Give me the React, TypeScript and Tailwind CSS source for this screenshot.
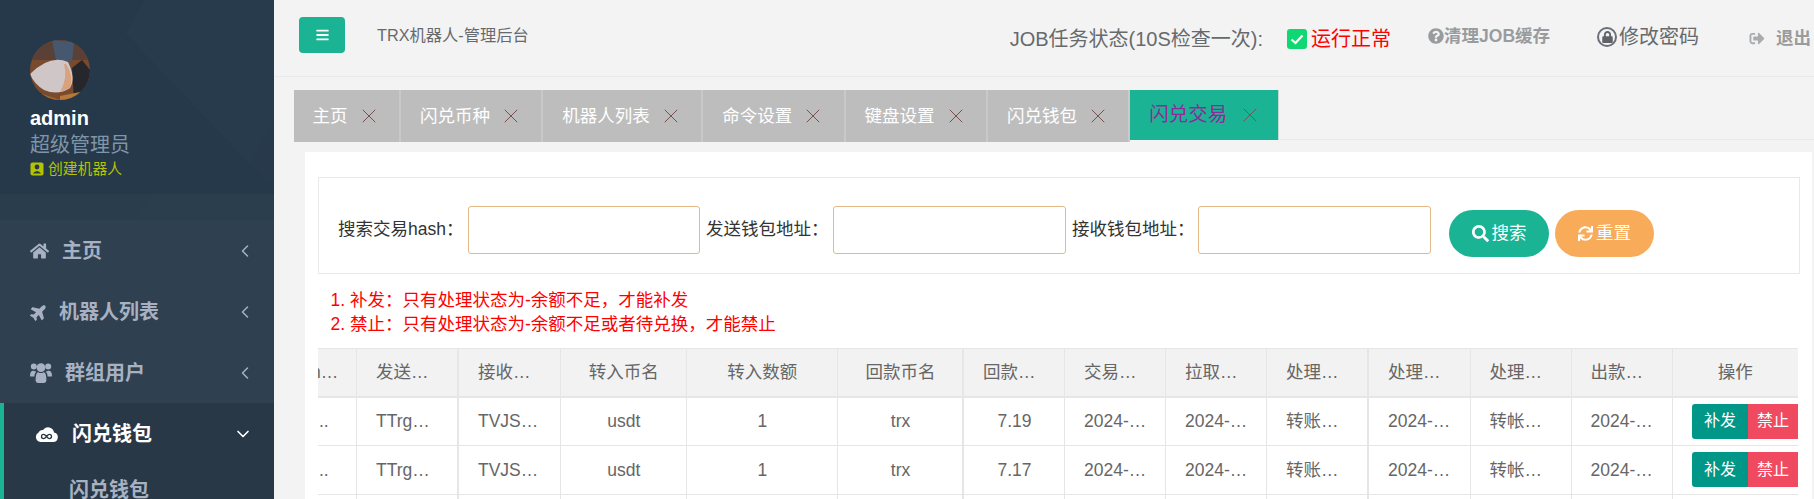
import React from "react";
import { FaHome, FaPlane, FaSearch, FaSync, FaQuestionCircle, FaLock, FaSignOutAlt, FaBars } from "react-icons/fa";
import { X, ChevronLeft, ChevronDown } from "lucide-react";

const tabs = ["主页", "闪兑币种", "机器人列表", "命令设置", "键盘设置", "闪兑钱包"];

const cols = [
  { cls: "w-[39px]", bar: "border-r", h: "n…", c: ".." },
  { cls: "w-[102px]", bar: "border-r-2", h: "发送钱包地址", c: "TTrg5xkVmQ2n" },
  { cls: "w-[102px]", bar: "border-r", h: "接收钱包地址", c: "TVJS8pLqWz3k" },
  { cls: "w-[125.5px]", bar: "border-r", h: "转入币名", c: "usdt" },
  { cls: "w-[151.5px]", bar: "border-r", h: "转入数额", c: "1" },
  { cls: "w-[126px]", bar: "border-r-2", h: "回款币名", c: "trx" },
  { cls: "w-[101px]", bar: "border-r", h: "回款数额", c: "7.19" },
  { cls: "w-[101px]", bar: "border-r", h: "交易时间", c: "2024-03-18 10:21" },
  { cls: "w-[101px]", bar: "border-r", h: "拉取时间", c: "2024-03-18 10:21" },
  { cls: "w-[102px]", bar: "border-r-2", h: "处理状态", c: "转账成功" },
  { cls: "w-[101.5px]", bar: "border-r", h: "处理时间", c: "2024-03-18 10:22" },
  { cls: "w-[101px]", bar: "border-r", h: "处理结果", c: "转帐成功" },
  { cls: "w-[101px]", bar: "border-r", h: "出款时间", c: "2024-03-18 10:22" },
];

function UsersIcon() {
  return (
    <svg width="22" height="21" viewBox="0 0 22 21" fill="currentColor">
      <circle cx="3.8" cy="4.6" r="3" />
      <circle cx="18.2" cy="4.6" r="3" />
      <circle cx="11" cy="5.6" r="4.4" />
      <path d="M0 14 Q0 8.6 3.6 8.8 Q5 9.4 6.2 9.4 Q4.4 11.4 4.4 14.6 L1.4 14.6 Q0 14.6 0 14Z" />
      <path d="M22 14 Q22 8.6 18.4 8.8 Q17 9.4 15.8 9.4 Q17.6 11.4 17.6 14.6 L20.6 14.6 Q22 14.6 22 14Z" />
      <path d="M5.6 18.6 Q5.6 10.4 8.2 10.2 Q11 12 13.8 10.2 Q16.4 10.4 16.4 18.6 Q16.4 21 14 21 L8 21 Q5.6 21 5.6 18.6Z" />
    </svg>
  );
}

function NavItem({ icon, label, gap }: { icon: React.ReactNode; label: string; gap: string }) {
  return (
    <div className="flex h-[61px] items-center pl-[30px] pr-[21px] text-[#a7b1c2]">
      {icon}
      <span className={`${gap} text-[20px] font-bold`}>{label}</span>
      <ChevronLeft className="ml-auto h-[20px] w-[20px] -mr-[2px]" strokeWidth={1.8} />
    </div>
  );
}

function Row({ value }: { value: string }) {
  return (
    <tr className="h-[48.5px] text-[#666]">
      {cols.map((col, i) => (
        <td
          key={i}
          className={`${col.bar} ${i === 0 ? "pl-[1px] text-left" : "pl-[19px] pr-[18px] text-center"} truncate border-b border-[#e6e6e6]`}
        >
          {i === 6 ? value : col.c}
        </td>
      ))}
      <td className="border-b border-[#e6e6e6] pl-[19.5px]">
        <div className="flex h-[35px] w-[106px] overflow-hidden text-[16px] text-white">
          <span className="flex w-[56px] items-center justify-center rounded-tl-[3px] rounded-bl-[3px] bg-[#009688]">补发</span>
          <span className="flex w-[50px] items-center justify-center bg-[#ef4a5f]">禁止</span>
        </div>
      </td>
    </tr>
  );
}

export default function App() {
  return (
    <div className="flex h-[499px] w-[1814px] overflow-hidden bg-[#f3f3f4] font-['Liberation_Sans','Noto_Sans_CJK_SC',sans-serif] text-[17.5px]">
      <aside className="w-[274px] shrink-0 bg-[#2f4050]">
        <div className="relative h-[220px] overflow-hidden bg-[#27394a]">
          <svg className="absolute inset-0" width="274" height="220" viewBox="0 0 274 220">
            <polygon points="0,0 145,0 125,33 274,190 274,220 0,220" fill="#26394a" />
            <polygon points="145,0 274,0 274,120 250,165 125,33" fill="#283b4c" />
            <polygon points="0,194 274,194 274,220 0,220" fill="#2a3d4d" />
            <polygon points="135,220 155,194 274,194 274,220" fill="#2b3e4e" />
          </svg>
          <div className="relative flex flex-col items-start pl-[30px] pt-[40px]">
            <svg width="60" height="60" viewBox="0 0 60 60" className="rounded-full">
              <rect width="60" height="60" fill="#7a4a2c" />
              <rect x="0" y="0" width="60" height="20" fill="#5b4038" />
              <polygon points="22,0 44,2 42,22 26,20" fill="#46586f" />
              <path d="M52 20 L60 30 L60 52 L44 60 L42 28Z" fill="#25272d" />
              <path d="M0 34 Q20 14 38 22 Q46 38 40 48 Q28 56 14 50 Q4 44 0 34Z" fill="#cfc6c8" />
              <path d="M36 24 Q44 36 40 48 L30 52 Q38 38 34 24Z" fill="#d9a27e" />
              <path d="M0 50 L30 60 L0 60Z" fill="#a8682c" />
              <path d="M30 56 L60 50 L60 60 L30 60Z" fill="#b9783a" />
            </svg>
            <div className="mt-[6px] text-[20px] font-bold leading-[24px] text-white">admin</div>
            <div className="mt-[2px] text-[20px] leading-[26px] text-[#8095a8]">超级管理员</div>
            <div className="mt-[1px] flex items-center text-[14.8px] leading-[20px] text-[#b4c400]">
              <svg width="14" height="14" viewBox="0 0 14 14" className="mr-[4px]">
                <rect x="0.5" y="0.5" width="13" height="13" rx="2" fill="#b4c400" />
                <circle cx="7" cy="5" r="2.4" fill="#27394a" />
                <path d="M2.8 11.5 Q7 6.5 11.2 11.5Z" fill="#27394a" />
              </svg>
              创建机器人
            </div>
          </div>
        </div>
        <nav>
          <NavItem icon={<FaHome className="h-[18px] w-[19px]" />} label="主页" gap="ml-[13px]" />
          <NavItem icon={<FaPlane className="h-[18px] w-[18px] -rotate-45" />} label="机器人列表" gap="ml-[11px]" />
          <NavItem icon={<UsersIcon />} label="群组用户" gap="ml-[13px]" />
          <div className="h-[120px] border-l-4 border-[#1ab394] bg-[#293846]">
            <div className="flex h-[61px] items-center pl-[31px] pr-[21px] text-white">
              <svg width="23" height="16" viewBox="0 0 23 16">
                <path d="M5.5 16 A5 5 0 0 1 3.6 6.6 A4 4 0 0 1 8 4 A6 6 0 0 1 19 6.5 A4.8 4.8 0 0 1 18 16Z" fill="#fff" />
                <path d="M8.6 8.4 a2.1 2.1 0 1 0 0 4.2 c2.2 0 3.6 -4.2 5.8 -4.2 a2.1 2.1 0 1 1 0 4.2 c-2.2 0 -3.6 -4.2 -5.8 -4.2Z" fill="none" stroke="#293846" strokeWidth="1.3" />
              </svg>
              <span className="ml-[14px] text-[20px] font-bold">闪兑钱包</span>
              <ChevronDown className="ml-auto h-[20px] w-[20px]" strokeWidth={2} />
            </div>
            <div className="pl-[65px] pt-[8px] text-[20px] font-bold leading-[36px] text-[#a7b1c2]">闪兑钱包</div>
          </div>
        </nav>
      </aside>

      <main className="min-w-0 flex-1">
        <header className="flex h-[77px] items-start overflow-hidden border-b border-[#e7eaec]">
          <button className="ml-[25px] mt-[17px] flex h-[36px] w-[46px] shrink-0 items-center justify-center rounded-[4px] bg-[#1ab394] text-white">
            <FaBars className="h-[14px] w-[15px]" />
          </button>
          <span className="ml-[32px] mt-[24px] shrink-0 text-[16.25px] leading-[22px] text-[#676a6c]">TRX机器人-管理后台</span>
          <span className="ml-[481px] mt-[25px] shrink-0 text-[20px] leading-[28px] text-[#676a6c]">JOB任务状态(10S检查一次):</span>
          <svg width="20" height="20" viewBox="0 0 20 20" className="ml-[24px] mt-[29px] shrink-0">
            <rect width="20" height="20" rx="3" fill="#0fd873" />
            <path d="M4.5 10.5 L8.5 14 L15.5 6.5" fill="none" stroke="#fff" strokeWidth="2.2" />
          </svg>
          <span className="ml-[4px] mt-[25px] shrink-0 text-[20px] leading-[28px] text-[#f00]">运行正常</span>
          <FaQuestionCircle className="ml-[37px] mt-[28px] h-[16px] w-[16px] shrink-0 text-[#999c9e]" />
          <span className="mt-[25px] shrink-0 text-[17.5px] font-bold leading-[22px] text-[#999c9e]">清理JOB缓存</span>
          <span className="ml-[47px] mt-[27px] flex h-[20px] w-[20px] shrink-0 items-center justify-center rounded-full border-2 border-[#6b7078] text-[#5f6368]">
            <FaLock className="h-[12px] w-[11px]" />
          </span>
          <span className="ml-[2px] mt-[23px] shrink-0 text-[20px] leading-[28px] text-[#676a6c]">修改密码</span>
          <FaSignOutAlt className="ml-[50px] mt-[31px] h-[15px] w-[16px] shrink-0 text-[#a9abad]" />
          <span className="ml-[11px] mt-[27px] shrink-0 text-[17.5px] font-bold leading-[22px] text-[#999c9e]">退出</span>
        </header>

        <div className="ml-[19.5px] mt-[13px] flex h-[50px] border-b border-[#e7eaec]">
          {tabs.map((t) => (
            <div key={t} className="flex h-[52px] items-center border-r-2 border-[#c9c9c9] bg-[#bdbdbd] pl-[19px] pr-[24.4px] text-white">
              <span>{t}</span>
              <X className="-mr-[6px] ml-[9px] h-[24px] w-[24px] text-[#7a5050]" strokeWidth={1} />
            </div>
          ))}
          <div className="flex h-[50px] items-center border-r border-[#c9d9d4] bg-[#1ab394] pl-[19px] pr-[22px] text-[19.5px] text-[#8e2b9a]">
            <span>闪兑交易</span>
            <X className="-mr-[6px] ml-[11px] h-[24px] w-[24px] text-[#5f5f5f]" strokeWidth={1} />
          </div>
        </div>

        <section className="ml-[31px] mr-[2px] mt-[12px] h-[400px] overflow-hidden bg-white pl-[13px] pr-[12px] pt-[25px]">
          <div className="flex h-[97px] items-start border border-[#e7eaec] pl-[19px] pt-[28px]">
            <label className="w-[130px] shrink-0 pt-[10px] leading-[26px] text-[#333]">搜索交易hash：</label>
            <input className="h-[48px] w-[232px] shrink-0 rounded-[3px] border border-[#e5b985] bg-white" />
            <span className="w-[6px] shrink-0" />
            <label className="w-[127px] shrink-0 pt-[10px] leading-[26px] text-[#333]">发送钱包地址：</label>
            <input className="h-[48px] w-[233px] shrink-0 rounded-[3px] border border-[#e5b985] bg-white" />
            <span className="w-[6px] shrink-0" />
            <label className="w-[126px] shrink-0 pt-[10px] leading-[26px] text-[#333]">接收钱包地址：</label>
            <input className="h-[48px] w-[233px] shrink-0 rounded-[3px] border border-[#e5b985] bg-white" />
            <button className="ml-[18px] mt-[4px] flex h-[47px] w-[100px] shrink-0 items-center justify-center rounded-[24px] bg-[#1ab394] text-white">
              <FaSearch className="mr-[3px] h-[17px] w-[17px]" />
              搜索
            </button>
            <button className="ml-[6px] mt-[4px] flex h-[47px] w-[99px] shrink-0 items-center justify-center rounded-[24px] bg-[#f8ac59] text-white">
              <FaSync className="mr-[3px] h-[15px] w-[15px]" />
              重置
            </button>
          </div>

          <ol className="mb-[12px] mt-[14px] list-decimal pl-[32px] leading-[24px] text-[#f00]">
            <li>补发：只有处理状态为-余额不足，才能补发</li>
            <li>禁止：只有处理状态为-余额不足或者待兑换，才能禁止</li>
          </ol>

          <table className="w-[1480px] table-fixed border-separate border-spacing-0 border-t border-[#e6e6e6] bg-white">
            <colgroup>
              {cols.map((col, i) => (
                <col key={i} className={col.cls} />
              ))}
              <col className="w-[125.5px]" />
            </colgroup>
            <thead>
              <tr className="h-[48.5px] bg-[#f2f2f2] text-[#666]">
                {cols.map((col, i) => (
                  <th
                    key={i}
                    className={`${col.bar} ${i === 0 ? "pl-[1px] text-left [text-indent:-8px]" : "pl-[19px] pr-[18px] text-center"} truncate border-b-2 border-[#e6e6e6] font-normal`}
                  >
                    {col.h}
                  </th>
                ))}
                <th className="border-b-2 border-[#e6e6e6] font-normal">操作</th>
              </tr>
            </thead>
            <tbody>
              <Row value="7.19" />
              <Row value="7.17" />
              <Row value="7.15" />
            </tbody>
          </table>
        </section>
      </main>
    </div>
  );
}
